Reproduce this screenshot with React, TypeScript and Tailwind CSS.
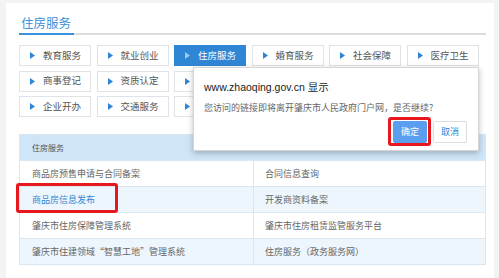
import React from "react";

const buttons = [
  ["教育服务", "就业创业", "住房服务", "婚育服务", "社会保障", "医疗卫生"],
  ["商事登记", "资质认定", "税务服务", "公安服务", "民政服务", "文化旅游"],
  ["企业开办", "交通服务", "农业服务", "司法公证", "其他服务", "更多服务"],
];

const rows = [
  ["商品房预售申请与合同备案", "合同信息查询"],
  ["商品房信息发布", "开发商资料备案"],
  ["肇庆市住房保障管理系统", "肇庆市住房租赁监管服务平台"],
  ["肇庆市住建领域“智慧工地”管理系统", "住房服务（政务服务网）"],
];

function Tri({ active }: { active?: boolean }) {
  return (
    <svg width="5" height="7" viewBox="0 0 5 7" className="shrink-0">
      <polygon points="0,0 5,3.5 0,7" fill={active ? "#9cc7ee" : "#2f86d4"} />
    </svg>
  );
}

export default function App() {
  const font = { fontFamily: '"Noto Sans CJK SC", "Noto Sans", sans-serif' };
  return (
    <div
      className="relative w-[499px] h-[278px] overflow-hidden bg-[#f3f3f3] pt-[3px] pl-[6px]"
      style={font}
    >
      <div className="w-[488px] h-[290px] bg-white pl-[13px] pt-[10px]">
        {/* tab title */}
        <div className="w-[467px] flex border-b-[2px] border-[#dcdcdc]">
          <div className="relative -mb-[2px] w-[55px] whitespace-nowrap border-b-[2px] border-[#3b8fdb] text-[12.5px] leading-[20px] text-[#3b8fdb] pl-[2px]">
            住房服务
          </div>
        </div>

        {/* buttons */}
        <div className="mt-[10px] grid grid-cols-[repeat(6,72px)] gap-x-[5.5px] gap-y-[4.5px]">
          {buttons.flat().map((b, idx) => {
            const active = idx === 2;
            return (
              <div
                key={b}
                className={
                  "h-[21px] flex items-center gap-[8px] pl-[10px] text-[9.5px] whitespace-nowrap " +
                  (active
                    ? "bg-[#2f86d4] text-white border border-[#2f86d4]"
                    : "bg-white text-[#555] border border-[#dfe3e8]")
                }
              >
                <Tri active={active} />
                <span className="leading-none">{b}</span>
              </div>
            );
          })}
        </div>

        {/* table */}
        <div className="mt-[17px] w-[467px] border border-[#dce6ef]">
          <div className="h-[25px] bg-[#cfe5f8] flex items-center pl-[12px] text-[8px] text-[#555]">
            住房服务
          </div>
          {rows.map((r, i) => (
            <div
              key={i}
              className={
                "h-[26px] flex border-t border-[#dce6ef] text-[9px] whitespace-nowrap " +
                (i % 2 === 1 ? "bg-[#eef6fd]" : "bg-white")
              }
            >
              <div
                className={
                  "w-[234px] border-r border-[#dce6ef] flex items-center pl-[12px] " +
                  (i === 1 ? "text-[#2f86d4]" : "text-[#666]")
                }
              >
                {r[0]}
              </div>
              <div className="flex-1 flex items-center pl-[11px] text-[#666]">{r[1]}</div>
            </div>
          ))}
        </div>
      </div>

      {/* dialog */}
      <div className="absolute left-[193px] top-[67px] w-[286px] h-[84px] bg-white border border-[#d5d5d5] shadow-[0_2px_6px_rgba(0,0,0,0.25)] pl-[10px] pt-[12px]">
        <div
          className="text-[10.5px] leading-[14px] text-[#222] whitespace-nowrap"
          style={{ fontFamily: '"Liberation Sans", "Noto Sans CJK SC", sans-serif' }}
        >
          www.zhaoqing.gov.cn 显示
        </div>
        <div className="mt-[8px] text-[9px] leading-[12px] text-[#666] whitespace-nowrap">
          您访问的链接即将离开肇庆市人民政府门户网，是否继续?
        </div>
        <div className="absolute right-[11px] top-[53px] flex gap-[6px]">
          <div className="w-[34px] h-[22px] bg-[#5b9ef0] text-white text-[9px] flex items-center justify-center rounded-[2px]">
            确定
          </div>
          <div className="w-[34px] h-[22px] bg-white border border-[#ddd] text-[#2f86d4] text-[9px] flex items-center justify-center rounded-[2px]">
            取消
          </div>
        </div>
      </div>

      {/* red highlight boxes */}
      <div className="absolute left-[388px] top-[117px] w-[43px] h-[29px] border-[3px] border-[#e8161d] rounded-[3px]" />
      <div className="absolute left-[16px] top-[183px] w-[102px] h-[30px] border-[3px] border-[#e8161d] rounded-[3px]" />
    </div>
  );
}
